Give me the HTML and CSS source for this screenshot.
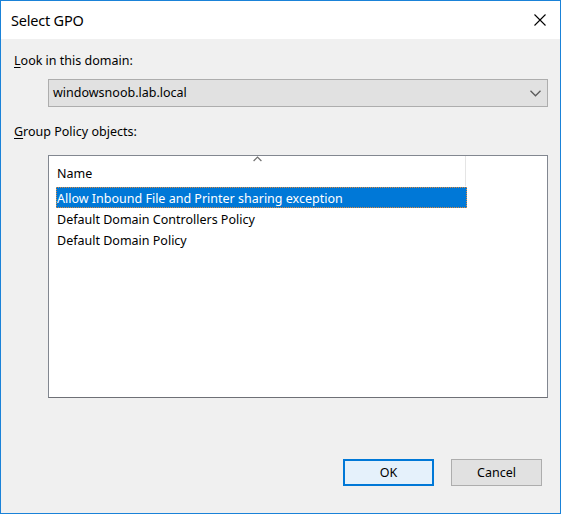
FILE: index.html
```html
<!DOCTYPE html>
<html>
<head>
<meta charset="utf-8">
<link rel="stylesheet" href="styles.css">
</head>
<body>
<div class="window">
  <div class="titlebar">
    <span class="title">Select GPO</span>
    <svg class="close" width="12" height="12" viewBox="0 0 12 12"><path d="M0.5 0.5 L11.5 11.5 M11.5 0.5 L0.5 11.5" stroke="#000" stroke-width="1.1" fill="none"/></svg>
  </div>
  <div class="content">
    <div class="label label-domain"><u>L</u>ook in this domain:</div>
    <div class="combo">
      <span class="combo-text">windowsnoob.lab.local</span>
      <svg class="chevron" width="11" height="7" viewBox="0 0 11 7"><path d="M0.5 0.8 L5.5 5.8 L10.5 0.8" stroke="#5a5a5a" stroke-width="1.3" fill="none"/></svg>
    </div>
    <div class="label label-gpo"><u>G</u>roup Policy objects:</div>
    <div class="listview">
      <div class="header">
        <div class="col-name">
          <svg class="sort" width="9" height="6" viewBox="0 0 9 6"><path d="M0.6 5 L4.5 1 L8.4 5" stroke="#6f6f6f" stroke-width="1.2" fill="none"/></svg>
          <span class="col-text">Name</span>
        </div>
        <div class="col-rest"></div>
      </div>
      <div class="rows">
        <div class="row selected"><span>Allow Inbound File and Printer sharing exception</span></div>
        <div class="row"><span>Default Domain Controllers Policy</span></div>
        <div class="row"><span>Default Domain Policy</span></div>
      </div>
    </div>
    <div class="buttons">
      <div class="btn btn-ok">OK</div>
      <div class="btn btn-cancel">Cancel</div>
    </div>
  </div>
</div>
</body>
</html>
```
FILE: styles.css
```css
html, body {
  margin: 0;
  padding: 0;
}
body {
  font-family: "Noto Sans", "Open Sans", sans-serif;
  font-size: 12.5px;
  color: #000;
}
.window {
  width: 561px;
  height: 514px;
  box-sizing: border-box;
  border: 1px solid #1a82d8;
  display: flex;
  flex-direction: column;
  background: #f0f0f0;
}
.titlebar {
  height: 38px;
  flex: none;
  background: #fff;
  display: flex;
  align-items: center;
  justify-content: space-between;
  padding-left: 10px;
  padding-right: 14px;
}
.title {
  font-size: 14.5px;
  letter-spacing: -0.2px;
}
.close {
  display: block;
}
.content {
  flex: 1;
  display: flex;
  flex-direction: column;
  padding-left: 13px;
}
.label {
  line-height: 16px;
  height: 16px;
}
.label u {
  text-decoration-thickness: 1px;
  text-underline-offset: 2px;
}
.label-domain {
  margin-top: 14px;
}
.combo {
  margin-top: 10px;
  margin-left: 34px;
  width: 500px;
  height: 28px;
  box-sizing: border-box;
  border: 1px solid #adadad;
  background: #e1e1e1;
  display: flex;
  align-items: center;
  justify-content: space-between;
  padding-left: 4px;
  padding-right: 6px;
}
.combo-text {
  line-height: 18px;
}
.chevron {
  display: block;
}
.label-gpo {
  margin-top: 17px;
}
.listview {
  margin-top: 15px;
  margin-left: 34px;
  width: 500px;
  height: 243px;
  box-sizing: border-box;
  border: 1px solid #828790;
  border-bottom-color: #6e7076;
  background: #fff;
  display: flex;
  flex-direction: column;
}
.header {
  height: 30px;
  flex: none;
  display: flex;
}
.col-name {
  width: 417px;
  box-sizing: border-box;
  border-right: 1px solid #e5e5e5;
  display: flex;
  flex-direction: column;
  align-items: center;
}
.sort {
  display: block;
  margin-top: 0px;
}
.col-text {
  align-self: flex-start;
  margin-left: 8px;
  margin-top: 4px;
  line-height: 16px;
}
.col-rest {
  flex: 1;
}
.rows {
  display: flex;
  flex-direction: column;
  padding-left: 7px;
  padding-top: 1px;
}
.row {
  height: 21px;
  line-height: 24px;
  width: 411px;
  box-sizing: border-box;
  padding-left: 1px;
  overflow: hidden;
}
.row.selected {
  background: #0078d7;
  color: #fff;
  outline: 1px dotted #e08a3c;
  outline-offset: -1px;
}
.buttons {
  margin-top: auto;
  margin-bottom: 27px;
  display: flex;
  justify-content: flex-end;
  gap: 17px;
  padding-right: 18px;
}
.btn {
  width: 91px;
  height: 27px;
  box-sizing: border-box;
  display: flex;
  align-items: center;
  justify-content: center;
}
.btn-ok {
  background: #e5f1fb;
  border: 1px solid #0078d7;
  box-shadow: inset 0 0 0 1px #0078d7;
}
.btn-cancel {
  background: #e1e1e1;
  border: 1px solid #adadad;
}
```
